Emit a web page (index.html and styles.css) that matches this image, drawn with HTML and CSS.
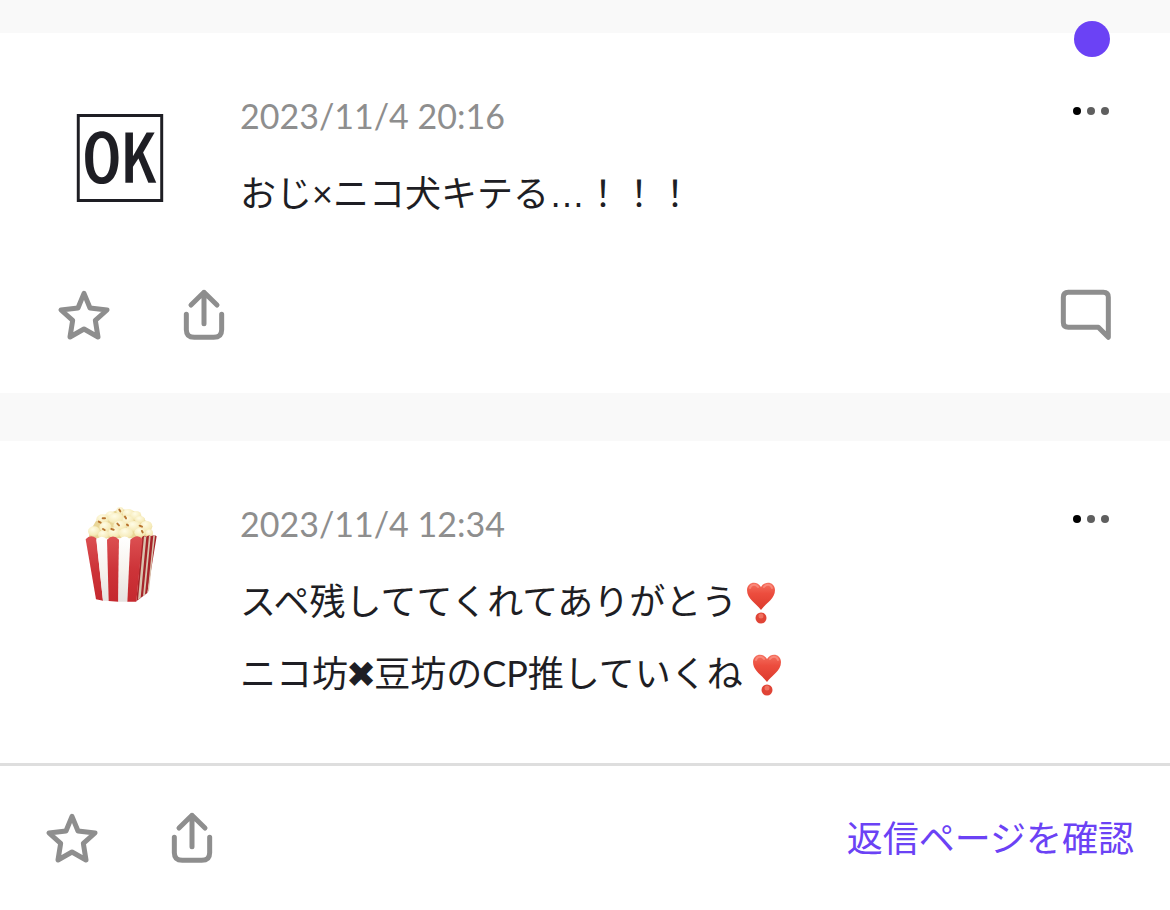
FILE: index.html
```html
<!DOCTYPE html>
<html lang="ja">
<head>
    <meta charset="UTF-8">
    <meta name="viewport" content="width=device-width, initial-scale=1.0">
    <title>タイムライン</title>
    <link rel="stylesheet" href="styles.css">
</head>
<body>
    <!-- shared icons -->
    <svg class="sprite" aria-hidden="true">
        <symbol id="icon-star" viewBox="0 0 180 180">
            <path d="M90 25 108 69 159 75 124 106 132 156 90 132 48 156 56 106 21 75 72 69Z"/>
        </symbol>
        <symbol id="icon-share" viewBox="0 0 180 180">
            <path d="M90 22V116M51 60 90 22 129 60M37 88V134Q37 157 61 157H119Q143 157 143 134V88"/>
        </symbol>
        <symbol id="icon-comment" viewBox="0 0 180 180">
            <path d="M157 157V37Q157 22 142 22H37Q22 22 22 37V112Q22 127 37 127H127Z"/>
        </symbol>
        <symbol id="icon-more" viewBox="0 0 60 60">
            <circle cx="16" cy="30" r="4"/>
            <circle cx="30" cy="30" r="4" fill="#5f5f5f"/>
            <circle cx="44" cy="30" r="4" fill="#5f5f5f"/>
        </symbol>
        <symbol id="icon-heart" viewBox="0 0 36 48">
            <path d="M18 31C13 24 4 20 4 11 4 3 14 1 18 8 22 1 32 3 32 11 32 20 23 24 18 31Z" fill="url(#heart)"/>
            <path d="M7 9C8 5 13 5 15 8M21 8C23 5 28 5 29 9" fill="none" stroke="#ff9d8f" stroke-width="2" stroke-linecap="round" opacity=".6"/>
            <circle cx="18" cy="39" r="5.5" fill="#e04436"/>
            <circle cx="18" cy="37" r="2.5" fill="#f0705f"/>
        </symbol>
        <defs>
            <linearGradient id="heart" x1="0" y1="0" x2="0" y2="1">
                <stop offset="0" stop-color="#f4705f"/>
                <stop offset=".4" stop-color="#ec4d3e"/>
                <stop offset="1" stop-color="#dc3a2c"/>
            </linearGradient>
        </defs>
    </svg>

    <main class="timeline">
        <article class="post">
            <span class="unread"></span>
            <div class="post-main">
                <div class="avatar avatar-ok">🆗</div>
                <div class="post-body">
                    <time class="date" datetime="2023-11-04T20:16">2023/11/4 20:16</time>
                    <p class="text">おじ×ニコ犬キテる<span class="dots">…</span>！！！</p>
                </div>
                <button class="icon-btn more" type="button" aria-label="メニュー"><svg class="solid"><use href="#icon-more"/></svg></button>
            </div>
            <div class="actions">
                <button class="icon-btn" type="button" aria-label="お気に入り"><svg><use href="#icon-star"/></svg></button>
                <button class="icon-btn" type="button" aria-label="共有"><svg><use href="#icon-share"/></svg></button>
                <button class="icon-btn push" type="button" aria-label="返信"><svg><use href="#icon-comment"/></svg></button>
            </div>
        </article>

        <article class="post">
            <div class="post-main">
                <div class="avatar">
                    <svg class="popcorn" viewBox="-30 36 360 360" role="img" aria-label="ポップコーン">
                        <defs>
                            <radialGradient id="corn" cx=".4" cy=".3" r=".9">
                                <stop offset="0" stop-color="#fffce6"/>
                                <stop offset=".6" stop-color="#f6ebba"/>
                                <stop offset="1" stop-color="#e0cb88"/>
                            </radialGradient>
                            <linearGradient id="red" x1="0" y1="0" x2="0" y2="1">
                                <stop offset="0" stop-color="#dc5052"/>
                                <stop offset=".5" stop-color="#cd3439"/>
                                <stop offset="1" stop-color="#c5282e"/>
                            </linearGradient>
                            <linearGradient id="white" x1="0" y1="0" x2="0" y2="1">
                                <stop offset="0" stop-color="#ffffff"/>
                                <stop offset=".5" stop-color="#f7f3ee"/>
                                <stop offset="1" stop-color="#e6e2e0"/>
                            </linearGradient>
                        </defs>
                        <path d="M56 130 60 108 78 78 110 58 150 42 192 48 222 70 244 104 246 130Z" fill="#e9d698"/>
                        <g fill="url(#corn)">
                            <ellipse cx="150" cy="48" rx="11" ry="12"/>
                            <ellipse cx="175" cy="56" rx="17" ry="14"/>
                            <ellipse cx="198" cy="62" rx="16" ry="14"/>
                            <ellipse cx="122" cy="60" rx="15" ry="11"/>
                            <ellipse cx="98" cy="73" rx="19" ry="15"/>
                            <ellipse cx="138" cy="70" rx="24" ry="16"/>
                            <ellipse cx="210" cy="74" rx="15" ry="11"/>
                            <ellipse cx="174" cy="76" rx="17" ry="14"/>
                            <ellipse cx="192" cy="94" rx="22" ry="16"/>
                            <ellipse cx="229" cy="94" rx="18" ry="17"/>
                            <ellipse cx="106" cy="96" rx="18" ry="16"/>
                            <ellipse cx="150" cy="92" rx="20" ry="15"/>
                            <ellipse cx="72" cy="109" rx="18" ry="15"/>
                            <ellipse cx="211" cy="112" rx="18" ry="14"/>
                            <ellipse cx="238" cy="114" rx="11" ry="11"/>
                            <ellipse cx="101" cy="119" rx="17" ry="13"/>
                            <ellipse cx="133" cy="113" rx="19" ry="16"/>
                            <ellipse cx="168" cy="115" rx="21" ry="17"/>
                        </g>
                        <g fill="none" stroke="#b8742f" stroke-width="6" stroke-linecap="round">
                            <path d="M148 44 151 49M165 65 168 70M98 70 105 70M86 80 92 83M142 86 147 91M99 102 104 105M124 102 131 104M209 92 216 95M171 89 174 91M216 108 218 112"/>
                        </g>
                        <path d="M215 128Q221 119 229 125 237 119 243 124 253 117 260 124L232 294 199 319Z" fill="#a62429"/>
                        <path d="M222 124 229 125 212 308 204 314ZM237 122 242 124 225 299 219 304ZM250 121 255 121 237 288 233 292Z" fill="#d9c3ae"/>
                        <path d="M47 133Q61 116 79 130L99 317 78 313Z" fill="url(#red)"/>
                        <path d="M79 134Q95 117 112 134L116 318 99 317Z" fill="url(#white)"/>
                        <path d="M111 134Q129 115 147 134L145 320 116 318Z" fill="url(#red)"/>
                        <path d="M147 134Q164 115 181 134L172 320 145 320Z" fill="url(#white)"/>
                        <path d="M181 134Q202 114 217 132L199 320 172 320Z" fill="url(#red)"/>
                    </svg>
                </div>
                <div class="post-body">
                    <time class="date" datetime="2023-11-04T12:34">2023/11/4 12:34</time>
                    <p class="text">スペ残しててくれてありがとう<svg class="heart" role="img" aria-label="❣️"><use href="#icon-heart"/></svg><br>
                    ニコ坊<span class="cross">✖</span>豆坊のCP推していくね<svg class="heart" role="img" aria-label="❣️"><use href="#icon-heart"/></svg></p>
                </div>
                <button class="icon-btn more" type="button" aria-label="メニュー"><svg class="solid"><use href="#icon-more"/></svg></button>
            </div>
            <div class="actions actions-reply">
                <button class="icon-btn" type="button" aria-label="お気に入り"><svg><use href="#icon-star"/></svg></button>
                <button class="icon-btn" type="button" aria-label="共有"><svg><use href="#icon-share"/></svg></button>
                <a class="reply-link push" href="#">返信ページを確認</a>
            </div>
        </article>
    </main>
</body>
</html>
```

FILE: styles.css
```css
* {
    box-sizing: border-box;
}
body {
    margin: 0;
    background: #f9f9f9;
    color: #1e1e24;
    font-family: Lato, "Noto Sans CJK JP", sans-serif;
    font-size: 36px;
}
.sprite {
    position: absolute;
    width: 0;
    height: 0;
}
.timeline {
    display: flex;
    flex-direction: column;
    gap: 48px;
    padding-top: 33px;
}
.post {
    position: relative;
    background: #fff;
}
.unread {
    position: absolute;
    top: -12px;
    right: 60px;
    width: 36px;
    height: 36px;
    border-radius: 50%;
    background: #6b42f5;
}
.post-main {
    display: flex;
    align-items: flex-start;
    padding: 66px 49px 54px 60px;
}
.avatar {
    flex: none;
    width: 120px;
    height: 120px;
    margin-right: 60px;
}
.avatar-ok {
    font-family: "Noto Sans CJK JP", sans-serif;
    font-size: 96px;
    line-height: 108px;
    text-align: center;
}
.popcorn {
    display: block;
    width: 120px;
    height: 120px;
}
.post-body {
    flex: 1;
    min-width: 0;
}
.date {
    display: block;
    color: #8e8e8e;
    font-size: 34px;
    line-height: 34px;
}
.text {
    margin: 24px 0 0;
    line-height: 72px;
}
.dots {
    font-family: "Liberation Sans", sans-serif;
    line-height: 36px;
}
.cross {
    margin: 0 -2px;
    font-family: "DejaVu Sans", sans-serif;
    line-height: 36px;
}
.heart {
    width: 36px;
    height: 48px;
    margin-left: 6px;
    vertical-align: -12px;
}
.icon-btn {
    flex: none;
    width: 60px;
    height: 60px;
    padding: 0;
    border: none;
    background: none;
    cursor: pointer;
}
.icon-btn svg {
    display: block;
    width: 60px;
    height: 60px;
    fill: none;
    stroke: #8e8e8e;
    stroke-width: 15px;
    stroke-linecap: round;
    stroke-linejoin: round;
}
.icon-btn .solid {
    fill: #000;
    stroke: none;
}
.more {
    margin-top: -18px;
}
.actions {
    display: flex;
    align-items: center;
    gap: 60px;
    padding: 2px 54px 48px;
}
.actions-reply {
    padding: 42px 36px 43px 42px;
    border-top: 3px solid #dedede;
}
.push {
    margin-left: auto;
}
.reply-link {
    color: #6b42f5;
    line-height: 56px;
    text-decoration: none;
}
```
